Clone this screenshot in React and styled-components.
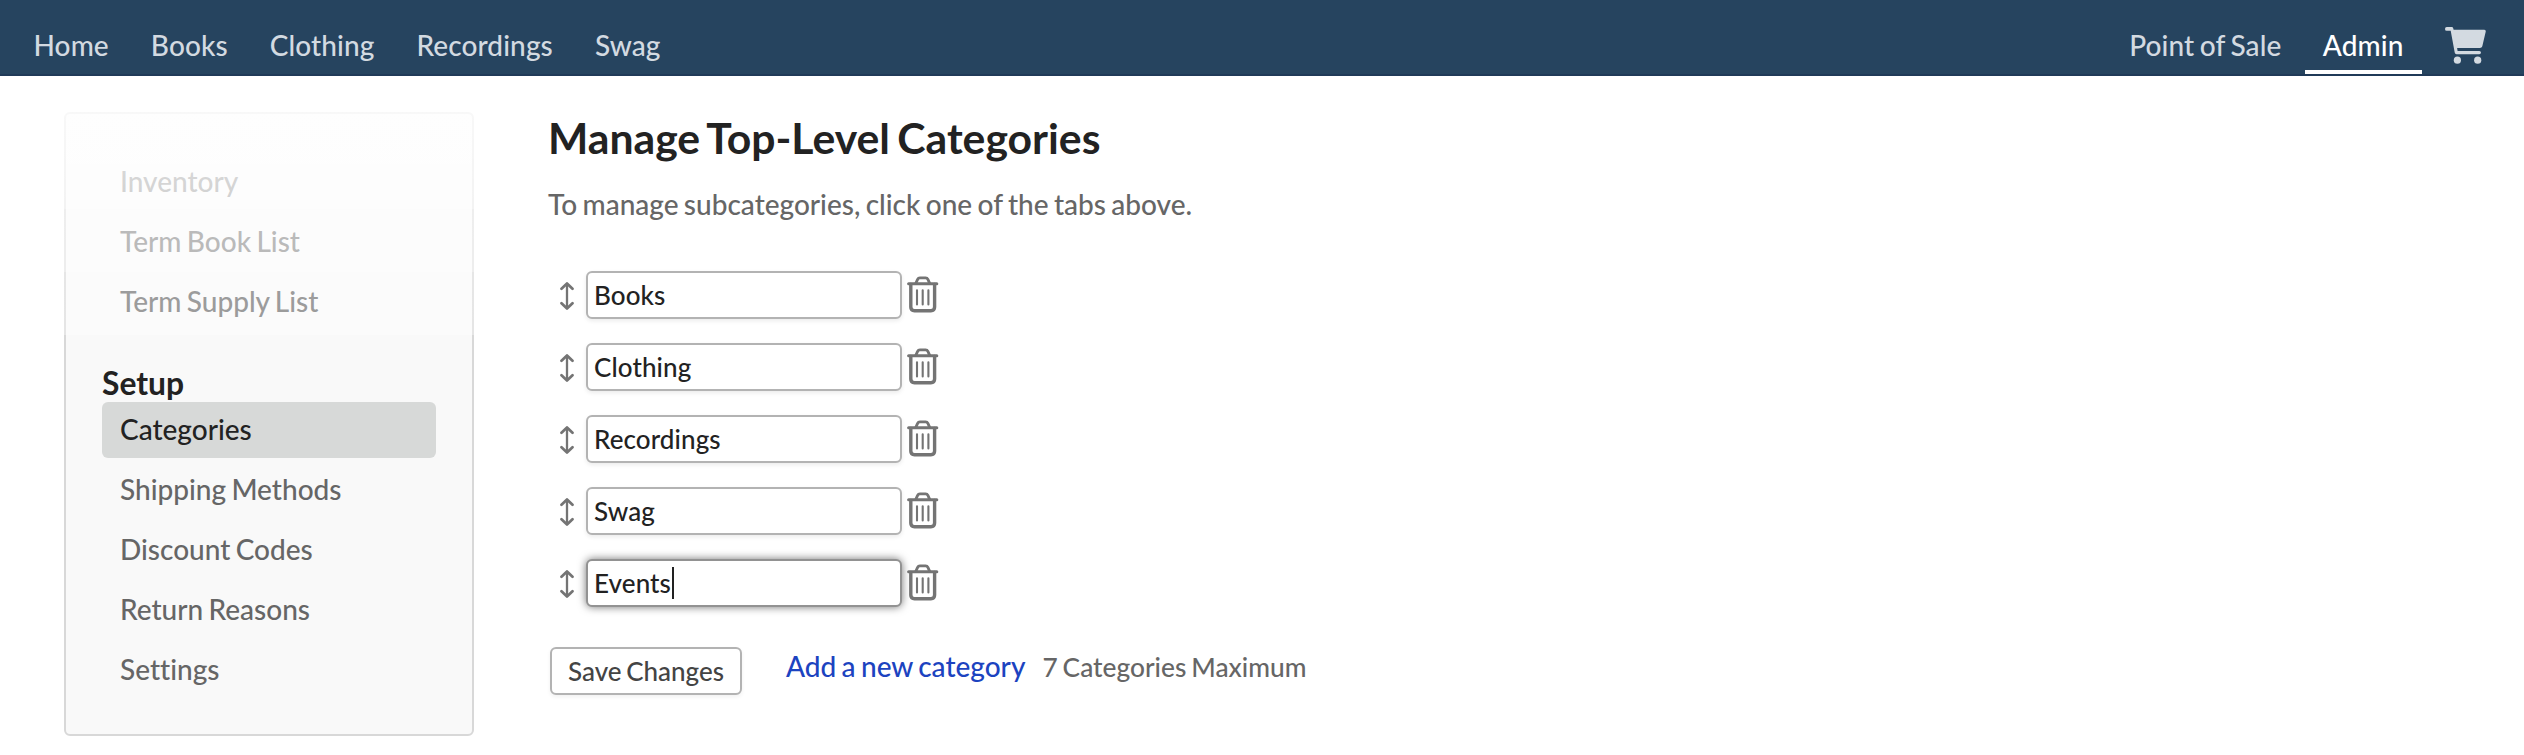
import styled, { createGlobalStyle } from "styled-components";

const GlobalStyle = createGlobalStyle`
  * {
    box-sizing: border-box;
  }

  body {
    margin: 0;
    background: #fff;
    color: #666;
    font-family: Lato, "Open Sans", sans-serif;
    font-size: 28px;
    font-weight: 500;
    line-height: 34px;
    word-spacing: -1.7px;
    font-variant-ligatures: none;
  }
`;

const NavBar = styled.nav`
  height: 76px;
  padding: 0 38px 0 33.5px;
  display: flex;
  justify-content: space-between;
  background: #26445f;
  border-bottom: 2px solid #203a58;
`;

const NavGroup = styled.div`
  display: flex;
  gap: ${({ $gap }) => $gap}px;
`;

const NavLink = styled.a`
  height: 74px;
  padding: ${({ $active }) => ($active ? "28px 18px 0" : "28px 0 0")};
  border-bottom: 4px solid ${({ $active }) => ($active ? "#fff" : "transparent")};
  color: ${({ $active }) => ($active ? "#fff" : "#d3dae1")};
  letter-spacing: 0.1px;
`;

const CartIcon = styled.svg`
  width: 41px;
  height: 37px;
  margin-top: 27px;
`;

const Page = styled.div`
  display: flex;
  padding: 36px 64px 0;
`;

const Sidebar = styled.aside`
  position: relative;
  width: 410px;
  height: 624px;
  padding: 40px 36px 0;
  background: #f9f9f9;
  border: 2px solid #d8d8d8;
  border-radius: 6px;
  flex: none;
`;

// Fades the top of the list out in steps
const Fade = styled.div`
  position: absolute;
  top: -2px;
  left: -2px;
  right: -2px;
  height: 225px;
  background: linear-gradient(
    rgba(255, 255, 255, 0.82) 0,
    rgba(255, 255, 255, 0.69) 97px,
    rgba(255, 255, 255, 0.56) 97px,
    rgba(255, 255, 255, 0.54) 160px,
    rgba(255, 255, 255, 0.36) 160px,
    rgba(255, 255, 255, 0.34) 223px,
    transparent 223px
  );
`;

const SideTitle = styled.h3`
  margin: 37px 0 0;
  height: 35px;
  color: #222;
  font-size: 31.8px;
  line-height: 33px;
  font-weight: 700;
`;

const SideLink = styled.a`
  display: block;
  height: 56px;
  margin-bottom: 4px;
  padding: 10px 18px;
  border-radius: 6px;
  background: ${({ $active }) => ($active ? "#d7d9d8" : "none")};
  color: ${({ $active }) => ($active ? "#222" : "#666")};
`;

const Main = styled.main`
  padding-left: 74px;
`;

const Title = styled.h1`
  margin: 2px 0 0;
  color: #222;
  font-size: 42.7px;
  line-height: 47px;
  font-weight: 700;
  word-spacing: -3px;
`;

const Hint = styled.p`
  margin: 26px 0 0;
`;

const CategoryList = styled.div`
  margin-top: 50px;
  display: flex;
  flex-direction: column;
  gap: 24px;
`;

const CategoryRow = styled.div`
  display: flex;
  align-items: center;
  height: 48px;
`;

const MoveIcon = styled.svg`
  width: 14px;
  height: 28px;
  margin: 2px 12px 0 12px;
`;

const NameField = styled.div`
  display: flex;
  align-items: center;
  width: 316px;
  height: 48px;
  padding: 0 6px;
  border: 2px solid ${({ $focused }) => ($focused ? "#929292" : "#b3b3b3")};
  border-radius: 6px;
  background: #fff;
  color: #222;
  font-size: 26px;
  letter-spacing: 0.1px;
  box-shadow: ${({ $focused }) =>
    $focused ? "0 0 8px rgba(0, 0, 0, 0.55)" : "0 2px 4px rgba(0, 0, 0, 0.08)"};
`;

const Caret = styled.span`
  width: 2px;
  height: 32px;
  margin-left: 1px;
  background: #222;
`;

const TrashIcon = styled.svg`
  width: 32px;
  height: 37px;
  margin-left: 5px;
  margin-top: -1px;
`;

const Actions = styled.div`
  display: flex;
  margin-top: 40px;
  padding-left: 2px;
`;

const SaveButton = styled.button`
  width: 192px;
  height: 48px;
  padding: 0;
  border: 2px solid #b3b3b3;
  border-radius: 6px;
  background: #fff;
  color: #444;
  font: inherit;
  font-size: 26px;
  word-spacing: -2px;
  box-shadow: 0 2px 4px rgba(0, 0, 0, 0.06);
`;

const AddLink = styled.a`
  margin: 2px 17px 0 44px;
  color: #1c43c0;
`;

const Limit = styled.span`
  margin-top: 3px;
  font-size: 26.3px;
`;

const Cart = () => (
  <CartIcon viewBox="0 0 41 37" fill="#d3dae1">
    <path d="M1.7 0H6.6Q8 0 8.3 1.4L8.6 2.7H39Q41.1 2.7 40.7 4.8L37.3 19.2Q36.8 21 34.9 21H12.1L12.6 24H34.3Q36 24 36 25.6T34.3 27.3H11.5Q10 27.3 9.7 25.6L5.7 3.8H1.7Q0 3.8 0 1.9T1.7 0Z" />
    <circle cx="12.4" cy="33.2" r="3.6" />
    <circle cx="32.7" cy="33.2" r="3.6" />
  </CartIcon>
);

const Move = () => (
  <MoveIcon viewBox="0 0 14 28" fill="none" stroke="#747474" strokeLinecap="round" strokeLinejoin="round">
    <path strokeWidth="2.3" d="M7 2V26" />
    <path strokeWidth="2.7" d="M1.5 6.8L7 1.5L12.5 6.8M1.5 21.2L7 26.5L12.5 21.2" />
  </MoveIcon>
);

const Trash = () => (
  <TrashIcon viewBox="0 0 32 37" fill="none" stroke="#747474" strokeLinecap="round" strokeLinejoin="round">
    <path strokeWidth="3" d="M1.6 7.8H29.8" />
    <path strokeWidth="2.8" d="M8.8 7.3L10.6 3.4Q11.3 1.9 12.9 1.9H18.6Q20.2 1.9 20.9 3.4L22.7 7.3" />
    <path strokeWidth="3.4" d="M3.8 8.5V31Q3.8 34.7 7.5 34.7H23.9Q27.6 34.7 27.6 31V8.5" />
    <path strokeWidth="2.1" d="M10 14.2V28.4M15.7 14.2V28.4M21.4 14.2V28.4" />
  </TrashIcon>
);

const shopLinks = ["Home", "Books", "Clothing", "Recordings", "Swag"];
const listLinks = ["Inventory", "Term Book List", "Term Supply List"];
const setupLinks = ["Categories", "Shipping Methods", "Discount Codes", "Return Reasons", "Settings"];
const categories = ["Books", "Clothing", "Recordings", "Swag", "Events"];

const App = () => {
  const focused = "Events";

  return (
    <>
      <GlobalStyle />
      <NavBar>
        <NavGroup $gap={42}>
          {shopLinks.map((name) => (
            <NavLink key={name}>{name}</NavLink>
          ))}
        </NavGroup>
        <NavGroup $gap={23.5}>
          <NavLink>Point of Sale</NavLink>
          <NavLink $active>Admin</NavLink>
          <Cart />
        </NavGroup>
      </NavBar>

      <Page>
        <Sidebar>
          {listLinks.map((name) => (
            <SideLink key={name}>{name}</SideLink>
          ))}
          <SideTitle>Setup</SideTitle>
          {setupLinks.map((name) => (
            <SideLink key={name} $active={name === "Categories"}>
              {name}
            </SideLink>
          ))}
          <Fade />
        </Sidebar>

        <Main>
          <Title>Manage Top-Level Categories</Title>
          <Hint>To manage subcategories, click one of the tabs above.</Hint>
          <CategoryList>
            {categories.map((name) => (
              <CategoryRow key={name}>
                <Move />
                <NameField $focused={name === focused}>
                  {name}
                  {name === focused && <Caret />}
                </NameField>
                <Trash />
              </CategoryRow>
            ))}
          </CategoryList>
          <Actions>
            <SaveButton>Save Changes</SaveButton>
            <AddLink>Add a new category</AddLink>
            <Limit>7 Categories Maximum</Limit>
          </Actions>
        </Main>
      </Page>
    </>
  );
};

export default App;
